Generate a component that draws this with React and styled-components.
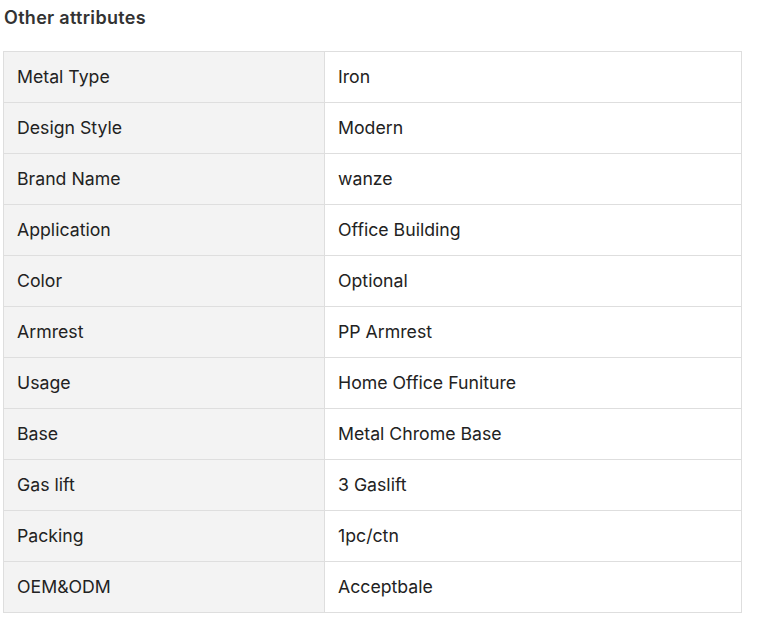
import styled, { createGlobalStyle } from "styled-components";

const GlobalStyle = createGlobalStyle`
  body {
    margin: 0;
    background: #fff;
    font-family: Inter, "Noto Sans", sans-serif;
    color: #222;
  }
`;

const Section = styled.section`
  padding: 6px 16px 0 3px;
  width: 739px;
`;

const Title = styled.h3`
  margin: 0 0 21px 1px;
  font-size: 18px;
  line-height: 24px;
  font-weight: 600;
  letter-spacing: 0.3px;
  color: #333;
`;

const Table = styled.table`
  width: 739px;
  border-collapse: collapse;
  font-size: 17.7px;
`;

const Cell = styled.td`
  box-sizing: border-box;
  height: 51px;
  padding: 0 13px 2px;
  border: 1px solid #dedede;
  background: ${(p) => (p.$label ? "#f3f3f3" : "#fff")};
  width: ${(p) => (p.$label ? "321px" : "auto")};
  color: #222;
  vertical-align: middle;
`;

const attributes = [
  ["Metal Type", "Iron"],
  ["Design Style", "Modern"],
  ["Brand Name", "wanze"],
  ["Application", "Office Building"],
  ["Color", "Optional"],
  ["Armrest", "PP Armrest"],
  ["Usage", "Home Office Funiture"],
  ["Base", "Metal Chrome Base"],
  ["Gas lift", "3 Gaslift"],
  ["Packing", "1pc/ctn"],
  ["OEM&ODM", "Acceptbale"],
];

export default function App() {
  return (
    <>
      <GlobalStyle />
      <Section>
        <Title>Other attributes</Title>
        <Table>
          <tbody>
            {attributes.map(([label, value]) => (
              <tr key={label}>
                <Cell $label>{label}</Cell>
                <Cell>{value}</Cell>
              </tr>
            ))}
          </tbody>
        </Table>
      </Section>
    </>
  );
}
